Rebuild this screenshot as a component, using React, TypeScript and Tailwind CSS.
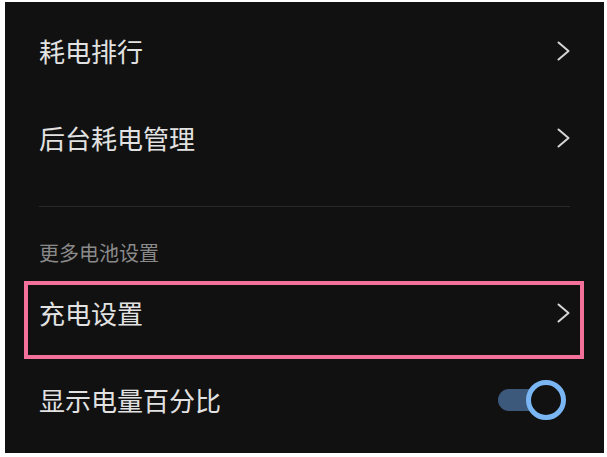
import { ReactNode } from "react";

const font = { fontFamily: '"Noto Sans CJK SC", "Noto Sans", sans-serif' };

function Chevron() {
  return (
    <svg width="13" height="20" viewBox="0 0 13 20" fill="none" className="shrink-0">
      <polyline
        points="1.5,1.5 11.5,10 1.5,18.5"
        stroke="#d6d6d6"
        strokeWidth="2"
        strokeLinecap="round"
        strokeLinejoin="round"
      />
    </svg>
  );
}

function Toggle() {
  return (
    <div className="relative w-[68px] h-[40px] shrink-0">
      <div className="absolute left-0 top-[9px] w-[52px] h-[22px] rounded-full bg-[#3c597b]" />
      <div className="absolute right-0 top-0 w-[40px] h-[40px] rounded-full border-[5px] border-[#7ab5f4] bg-[#111111]" />
    </div>
  );
}

function Row({
  label,
  height,
  right,
  highlight,
}: {
  label: string;
  height: string;
  right: ReactNode;
  highlight?: boolean;
}) {
  return (
    <div className={`relative flex items-center justify-between ${height}`}>
      <span className="text-[26px] leading-[36px] font-normal text-[#e2e2e2]">{label}</span>
      {right}
      {highlight && (
        <div className="absolute left-[-15px] right-[-14px] top-[5px] bottom-[-9px] border-[4px] border-[#f3719a] pointer-events-none" />
      )}
    </div>
  );
}

export default function App() {
  return (
    <div className="w-[607px] h-[457px] bg-white pt-[2px] pl-[5px]" style={font}>
      <div className="w-[599px] h-[451px] bg-[#111111] pt-[5px] px-[34px]">
        <Row label="耗电排行" height="h-[87px]" right={<Chevron />} />
        <Row label="后台耗电管理" height="h-[87px]" right={<Chevron />} />
        <div className="mt-[25px] h-px bg-[#2a2a2a]" />
        <div className="mt-[32px] text-[20px] leading-[28px] text-[#8a8a8a]">更多电池设置</div>
        <Row label="充电设置" height="mt-[9px] h-[74px]" right={<Chevron />} highlight />
        <Row
          label="显示电量百分比"
          height="mt-[6px] h-[87px]"
          right={
            <div className="mr-[4px]">
              <Toggle />
            </div>
          }
        />
      </div>
    </div>
  );
}
